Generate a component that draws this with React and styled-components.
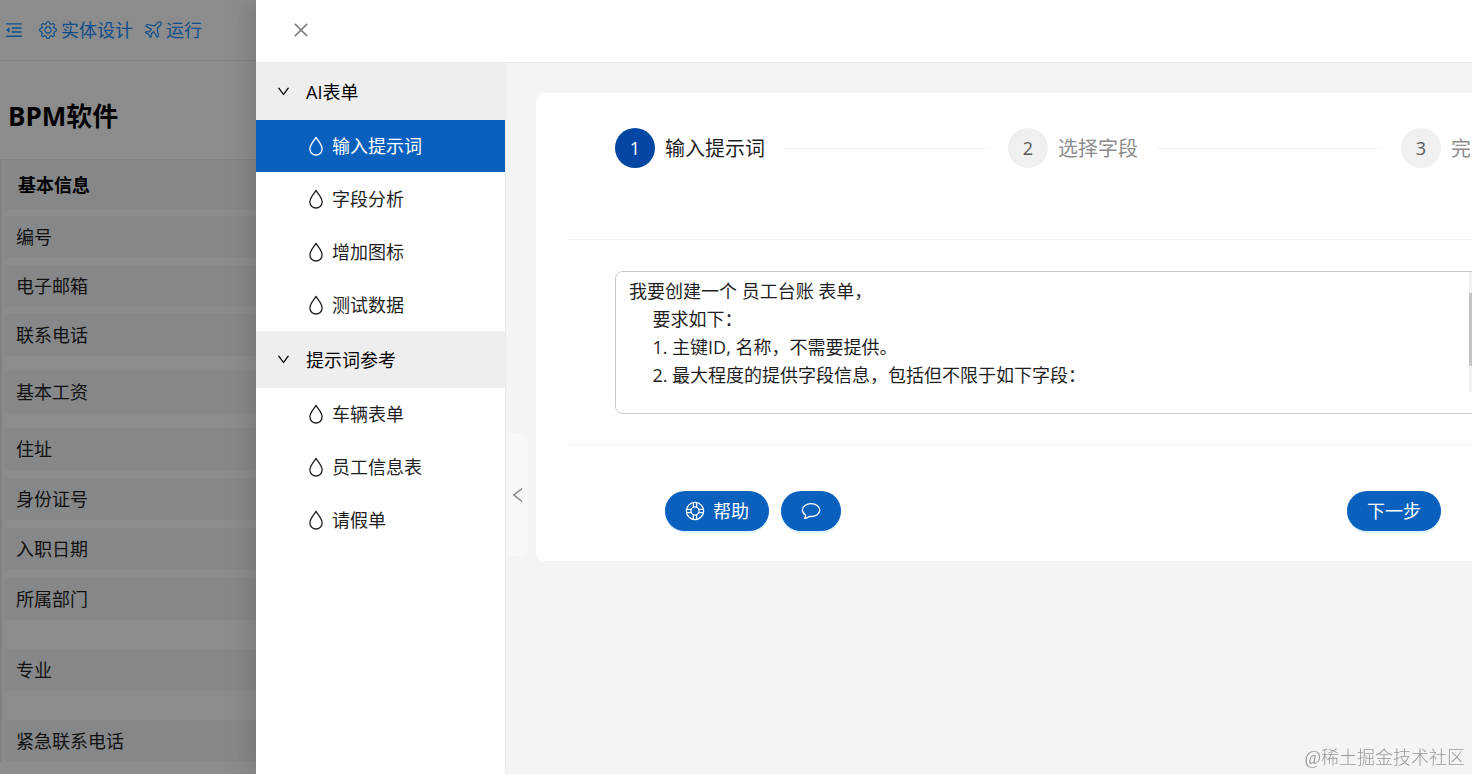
import React, { useState } from 'react'
import styled, { createGlobalStyle, css } from 'styled-components'
import { AiOutlineClose, AiOutlineDown, AiOutlineLeft, AiOutlineMenuFold } from 'react-icons/ai'
import { BsGear } from 'react-icons/bs'

const fields = [
  { label: '编号', space: 7 },
  { label: '电子邮箱', space: 7 },
  { label: '联系电话', space: 15 },
  { label: '基本工资', space: 15 },
  { label: '住址', space: 8 },
  { label: '身份证号', space: 8 },
  { label: '入职日期', space: 8 },
  { label: '所属部门', space: 29 },
  { label: '专业', space: 29 },
  { label: '紧急联系电话', space: 8 },
]

const menu = [
  { title: 'AI表单', items: ['输入提示词', '字段分析', '增加图标', '测试数据'] },
  { title: '提示词参考', items: ['车辆表单', '员工信息表', '请假单'] },
]

const steps = ['输入提示词', '选择字段', '完成']

const defaultPrompt = `我要创建一个 员工台账 表单，
     要求如下：
     1. 主键ID, 名称，不需要提供。
     2. 最大程度的提供字段信息，包括但不限于如下字段：
`

const GlobalStyle = createGlobalStyle`
  * {
    box-sizing: border-box;
  }

  body {
    margin: 0;
    overflow: hidden;
    background: #fff;
    color: #1f1f1f;
    font-family: 'Open Sans', 'Noto Sans CJK SC', sans-serif;
    font-size: 18px;
    line-height: 28px;
  }

  button,
  textarea {
    font: inherit;
    color: inherit;
  }

  button {
    padding: 0;
    border: 0;
    background: none;
    cursor: pointer;
  }
`

const Icon = styled.svg.attrs({
  viewBox: '0 0 20 20',
  fill: 'none',
  stroke: 'currentColor',
  strokeWidth: 1.3,
  strokeLinejoin: 'round',
  strokeLinecap: 'round',
  'aria-hidden': true,
})`
  flex: none;
  width: 20px;
  height: 20px;
`

const DropIcon = () => (
  <Icon>
    <path d="M10 1.4C8.4 4.4 3.9 8.6 3.9 12.9a6.1 6.1 0 0 0 12.2 0C16.1 8.6 11.6 4.4 10 1.4Z" />
  </Icon>
)

const PlaneIcon = () => (
  <Icon>
    <path d="M18.7 1.3c-.9-.9-2.6-.3-3.7.8l-3.2 3.3-8.3-1.5-1.6 1.6 6.4 3.7-2.7 3-2.7-.5-1.3 1.3 3.6 1.8 1.9 3.6 1.2-1.3-.4-2.7 2.9-2.7 3.8 6.3 1.6-1.6-1.7-8.1 3.4-3.3c1.1-1.1 1.7-2.8.8-3.7Z" />
  </Icon>
)

const HelpIcon = () => (
  <Icon>
    <circle cx="10" cy="10" r="8.6" />
    <circle cx="10" cy="10" r="4.1" />
    <path d="M8.4 1.6v4.6M11.6 1.6v4.6M8.4 13.8v4.6M11.6 13.8v4.6M1.6 8.4h4.6M1.6 11.6h4.6M13.8 8.4h4.6M13.8 11.6h4.6" />
  </Icon>
)

const ChatIcon = () => (
  <Icon>
    <path d="M10.2 2.7c-4.9 0-8.8 2.7-8.8 6.3 0 2.2 1.3 3.9 3.1 5.1.2 1.3-.3 2.4-1.2 3.3 2 .1 3.7-.7 4.9-2 .7.1 1.3.1 2 .1 4.7 0 8.5-2.8 8.5-6.4s-3.8-6.4-8.5-6.4Z" />
  </Icon>
)

const Page = styled.div`
  height: 100vh;
  overflow: hidden;
`

const Toolbar = styled.header`
  display: flex;
  align-items: center;
  gap: 11px;
  height: 61px;
  padding-left: 4px;
  border-bottom: 1px solid #ebebeb;
`

const ToolButton = styled.button`
  display: flex;
  align-items: center;
  gap: 4px;
  color: #1890ff;

  svg {
    width: 18px;
    height: 18px;
  }
`

const FoldButton = styled(ToolButton)`
  margin-right: 4px;

  svg {
    width: 20px;
    height: 20px;
  }
`

const Title = styled.h1`
  margin: 0;
  padding: 37px 8px 25px;
  color: #000;
  font-size: 26px;
  line-height: 36px;
`

const Form = styled.section`
  padding-left: 3px;
  border-top: 1px solid #e9ebed;
  border-left: 2px solid #e9ebed;
`

const FormTitle = styled.h2`
  margin: 0 0 6px;
  padding: 11px 13px;
  background: #f4f6f8;
  color: #000;
  font-size: 18px;
  line-height: 28px;
`

const Field = styled.div`
  height: 42px;
  margin-bottom: ${({ $space }) => $space}px;
  padding: 7px 11px;
  background: #f4f6f8;
`

const Mask = styled.div`
  position: fixed;
  inset: 0;
  background: rgba(0, 0, 0, 0.45);
`

const Drawer = styled.aside`
  position: fixed;
  inset: 0 0 0 256px;
  display: flex;
  flex-direction: column;
  background: #fff;
  box-shadow: -6px 0 16px rgba(0, 0, 0, 0.08), -9px 0 28px 8px rgba(0, 0, 0, 0.05);
`

const DrawerHeader = styled.header`
  display: flex;
  align-items: center;
  height: 63px;
  padding: 0 35px 2px;
  border-bottom: 1px solid #ececec;
`

const CloseButton = styled.button`
  display: flex;
  color: #808080;

  svg {
    width: 20px;
    height: 20px;
  }
`

const DrawerBody = styled.div`
  flex: 1;
  display: flex;
  min-height: 0;
`

const Sidebar = styled.nav`
  flex: none;
  width: 250px;
  border-right: 1px solid #ebebeb;
  background: #fff;
`

const GroupButton = styled.button`
  display: flex;
  align-items: center;
  gap: 15px;
  width: 100%;
  height: 57px;
  padding: 0 20px;
  background: #eee;
  color: #000;

  svg {
    width: 15px;
    height: 15px;
    transform: rotate(${({ $open }) => ($open ? 0 : -90)}deg);
  }
`

const MenuList = styled.ul`
  display: grid;
  gap: 1px;
  margin: 0;
  padding: 0;
  list-style: none;
`

const MenuItem = styled.button`
  display: flex;
  align-items: center;
  gap: 6px;
  width: 100%;
  height: 52px;
  padding-left: 50px;

  ${({ $active }) =>
    $active &&
    css`
      background: #0960bd;
      color: #fff;
    `}
`

const Main = styled.main`
  flex: 1;
  display: flex;
  align-items: flex-start;
  overflow: hidden;
  background: #f2f4f6;
`

const Rail = styled.div`
  flex: none;
  width: 30px;
  padding: 370px 0 0 2px;
`

const CollapseButton = styled.button`
  display: flex;
  align-items: center;
  justify-content: center;
  width: 20px;
  height: 123px;
  border-radius: 0 6px 6px 0;
  background: #f7f8fa;
  color: #8c8c8c;

  svg {
    width: 20px;
    height: 20px;
  }
`

const Card = styled.div`
  flex: 1 0 1034px;
  margin-top: 30px;
  padding: 35px 32px 30px;
  border-radius: 8px;
  background: #fff;
`

const Steps = styled.ol`
  display: flex;
  margin: 0;
  padding: 0 47px 71px;
  list-style: none;
`

const Step = styled.li`
  flex: ${({ $last }) => ($last ? 'none' : '1')};
  display: flex;
  align-items: center;
  gap: 10px;
  color: ${({ $active }) => ($active ? '#1f1f1f' : '#8c8c8c')};
  font-size: 20px;
  white-space: nowrap;

  ${({ $last }) =>
    !$last &&
    css`
      &::after {
        content: '';
        flex: 1;
        height: 1px;
        margin: 0 20px 0 10px;
        background: #f0f0f0;
      }
    `}
`

const StepLabel = styled.span`
  padding-top: 2px;
`

const StepNumber = styled.span`
  display: grid;
  place-items: center;
  width: 40px;
  height: 40px;
  border-radius: 50%;
  background: ${({ $active }) => ($active ? '#0346a3' : '#f0f0f0')};
  color: ${({ $active }) => ($active ? '#fff' : '#595959')};
  font-size: 18px;
`

const PromptArea = styled.div`
  padding: 31px 47px 30px;
  border: solid #f3f3f3;
  border-width: 1px 0;
`

const PromptBox = styled.div`
  position: relative;
`

const Prompt = styled.textarea`
  display: block;
  width: 100%;
  height: 143px;
  padding: 5px 34px 5px 13px;
  border: 1px solid #c8c8c8;
  border-radius: 8px;
  outline: 0;
  background: #fff;
  line-height: 28px;
  resize: none;
  scrollbar-width: none;
`

const ScrollTrack = styled.div`
  position: absolute;
  top: 1px;
  right: 1px;
  width: 21px;
  height: 120px;
  padding: 21px 0;
  background: #f1f1f1;
`

const ScrollThumb = styled.div`
  height: 73px;
  background: #c4c4c4;
`

const Actions = styled.div`
  display: flex;
  gap: 12px;
  padding: 46px 97px 0;
`

const PrimaryButton = styled.button`
  display: flex;
  align-items: center;
  gap: 8px;
  height: 40px;
  padding: 0 20px;
  border-radius: 20px;
  background: #0960bd;
  box-shadow: 0 2px 0 #dff3ff;
  color: #fff;

  &:last-child {
    margin-left: auto;
  }
`

const Watermark = styled.div`
  position: fixed;
  right: 7px;
  bottom: 2px;
  color: #999;
  font-family: 'Liberation Serif', 'Noto Sans CJK SC', serif;
  font-weight: 300;
`

const MenuGroup = ({ title, items, current, onSelect }) => {
  const [open, setOpen] = useState(true)
  return (
    <>
      <GroupButton $open={open} aria-expanded={open} onClick={() => setOpen(!open)}>
        <AiOutlineDown />
        {title}
      </GroupButton>
      {open && (
        <MenuList>
          {items.map(item => (
            <li key={item}>
              <MenuItem $active={item === current} onClick={() => onSelect(item)}>
                <DropIcon />
                {item}
              </MenuItem>
            </li>
          ))}
        </MenuList>
      )}
    </>
  )
}

const App = () => {
  const [current, setCurrent] = useState('输入提示词')
  const [prompt, setPrompt] = useState(defaultPrompt)

  return (
    <>
      <GlobalStyle />
      <Page>
        <Toolbar>
          <FoldButton aria-label="菜单"><AiOutlineMenuFold /></FoldButton>
          <ToolButton><BsGear />实体设计</ToolButton>
          <ToolButton><PlaneIcon />运行</ToolButton>
        </Toolbar>
        <Title>BPM软件</Title>
        <Form>
          <FormTitle>基本信息</FormTitle>
          {fields.map(({ label, space }) => (
            <Field key={label} $space={space}>{label}</Field>
          ))}
        </Form>
      </Page>
      <Mask />
      <Drawer>
        <DrawerHeader>
          <CloseButton aria-label="关闭"><AiOutlineClose /></CloseButton>
        </DrawerHeader>
        <DrawerBody>
          <Sidebar>
            {menu.map(group => (
              <MenuGroup key={group.title} {...group} current={current} onSelect={setCurrent} />
            ))}
          </Sidebar>
          <Main>
            <Rail>
              <CollapseButton aria-label="收起"><AiOutlineLeft /></CollapseButton>
            </Rail>
            <Card>
              <Steps>
                {steps.map((step, i) => (
                  <Step key={step} $active={i === 0} $last={i === steps.length - 1}>
                    <StepNumber $active={i === 0}>{i + 1}</StepNumber>
                    <StepLabel>{step}</StepLabel>
                  </Step>
                ))}
              </Steps>
              <PromptArea>
                <PromptBox>
                  <Prompt
                    aria-label="提示词"
                    spellCheck={false}
                    value={prompt}
                    onChange={e => setPrompt(e.target.value)}
                  />
                  <ScrollTrack aria-hidden>
                    <ScrollThumb />
                  </ScrollTrack>
                </PromptBox>
              </PromptArea>
              <Actions>
                <PrimaryButton><HelpIcon />帮助</PrimaryButton>
                <PrimaryButton aria-label="对话"><ChatIcon /></PrimaryButton>
                <PrimaryButton>下一步</PrimaryButton>
              </Actions>
            </Card>
          </Main>
        </DrawerBody>
      </Drawer>
      <Watermark>@稀土掘金技术社区</Watermark>
    </>
  )
}

export default App
